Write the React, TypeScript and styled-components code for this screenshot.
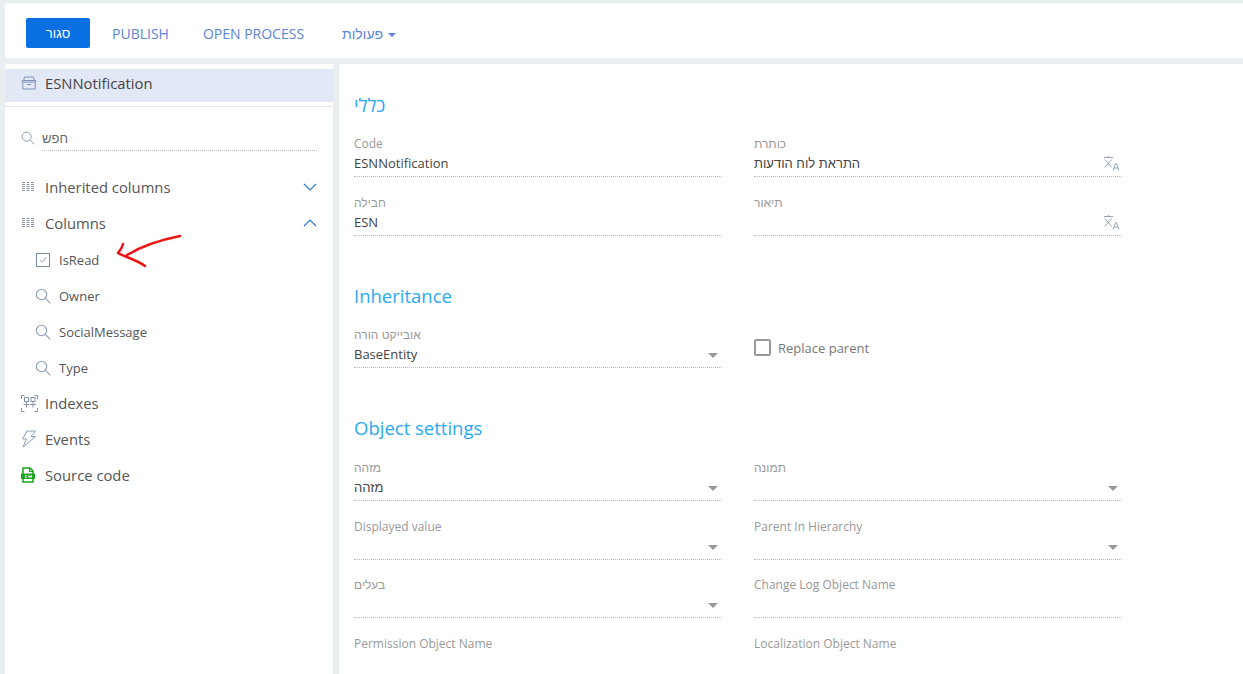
import React from "react";
import styled, { createGlobalStyle } from "styled-components";

const Global = createGlobalStyle`
  html, body { margin: 0; padding: 0; height: 100%; overflow: hidden; background: #e9eef0; }
  body { font-family: "Open Sans", "Noto Sans", "Liberation Sans", sans-serif; }
  #root { height: 674px; }
`;

const Page = styled.div`
  height: 674px;
  display: flex;
  flex-direction: column;
  padding: 3px 0 0 5px;
  box-sizing: border-box;
  overflow: hidden;
`;
const He = styled.span`
  font-family: "Liberation Sans", "Noto Sans", sans-serif;
`;
const Toolbar = styled.header`
  height: 55px;
  flex: none;
  background: #fff;
  border-radius: 3px 0 0 3px;
  display: flex;
  align-items: center;
  padding: 5px 0 0 21px;
  box-sizing: border-box;
`;
const PrimaryButton = styled.button`
  width: 64px;
  height: 30px;
  border: 0;
  border-radius: 2px;
  background: #0a6fe3;
  color: #fff;
  font: 400 13px "Liberation Sans", "Noto Sans", sans-serif;
  padding: 0;
  margin-right: 22px;
`;
const LinkButton = styled.span<{ $gap: number }>`
  font-size: 14px;
  color: #5c84d8;
  margin-right: ${(p) => p.$gap}px;
`;
const Caret = styled.i`
  display: inline-block;
  width: 0;
  height: 0;
  border: 4px solid transparent;
  border-top: 4px solid #5c84d8;
  border-bottom: 0;
  margin-left: 5px;
  vertical-align: 2px;
`;
const Body = styled.div`
  flex: 1;
  min-height: 0;
  display: flex;
  gap: 6px;
  margin-top: 6px;
`;
const Sidebar = styled.aside`
  width: 328px;
  flex: none;
  background: #fff;
  padding-top: 5px;
  box-sizing: border-box;
`;
const RootRow = styled.div`
  height: 33px;
  background: #e2e8f6;
  display: flex;
  align-items: center;
  padding: 0 0 5px 16px;
  box-sizing: border-box;
  font-size: 14.8px;
  color: #444;
  gap: 8px;
`;
const Divider = styled.div`
  height: 1px;
  background: #e6e3e8;
  margin-top: 4px;
`;
const Search = styled.div`
  display: flex;
  align-items: center;
  height: 24px;
  margin: 19px 16px 0 16px;
  gap: 7px;
`;
const SearchInput = styled.div`
  flex: 1;
  height: 25px;
  line-height: 25px;
  font-size: 13px;
  color: #666;
  border-bottom: 1px dotted #bbb;
  box-sizing: border-box;
`;
const Tree = styled.div`
  margin-top: 19px;
`;
const TreeRow = styled.div`
  height: 36px;
  display: flex;
  align-items: center;
  padding: 0 16px;
  font-size: 14.8px;
  color: #555;
`;
const ChildRow = styled.div`
  height: 36px;
  display: flex;
  align-items: center;
  padding: 2px 0 0 26px;
  box-sizing: border-box;
  font-size: 13px;
  color: #555;
`;
const IconSlot = styled.span`
  width: 24px;
  height: 18px;
  flex: none;
  display: flex;
  align-items: center;
`;
const ChildIconSlot = styled.span`
  width: 24px;
  height: 18px;
  flex: none;
  display: flex;
  align-items: center;
  justify-content: center;
  margin-right: 4px;
`;
const Label = styled.span`
  flex: 1;
`;
const Main = styled.main`
  flex: 1;
  background: #fff;
  border-radius: 3px 0 0 0;
  padding: 28px 0 0 15px;
  overflow: hidden;
`;
const SectionTitle = styled.h2<{ $top: number; $bottom: number }>`
  margin: ${(p) => p.$top}px 0 ${(p) => p.$bottom}px;
  font-size: 18.5px;
  font-weight: 400;
  line-height: 26px;
  color: #2aa9f2;
`;
const Grid = styled.div<{ $row?: number }>`
  display: grid;
  grid-template-columns: 368px 368px;
  column-gap: 32px;
  grid-auto-rows: ${(p) => p.$row ?? 59}px;
`;
const Field = styled.div`
  min-width: 0;
`;
const FieldLabel = styled.div`
  font-size: 12px;
  line-height: 16px;
  color: #999;
`;
const FieldValue = styled.div`
  height: 25px;
  padding: 2px 2px 4px 0;
  font-size: 13px;
  line-height: 18px;
  color: #444;
  border-bottom: 1px dotted #bbb;
  box-sizing: border-box;
  display: flex;
  align-items: center;
  justify-content: space-between;
`;
const SelectCaret = styled.i`
  width: 0;
  height: 0;
  border: 5px solid transparent;
  border-top: 5px solid #999;
  border-bottom: 0;
  margin: 3px 2px 0 0;
`;
const CheckField = styled.div`
  display: flex;
  align-items: center;
  gap: 7px;
  height: 59px;
  padding-bottom: 18px;
  box-sizing: border-box;
  font-size: 13px;
  color: #777;
`;
const CheckBox = styled.span`
  width: 13px;
  height: 13px;
  border: 2px solid #999;
  border-radius: 2px;
`;
const Arrow = styled.svg`
  position: absolute;
  left: 115px;
  top: 232px;
  pointer-events: none;
`;

const C = "#8c9cb8";
const Archive = () => (
  <svg width="16" height="14" viewBox="0 0 16 14" fill="none" stroke="#7f93b8">
    <path d="M2.5 5L3.5 1h9l1 4" />
    <rect x=".8" y="4.5" width="14.4" height="1.6" rx=".8" />
    <path d="M1.8 6v7h12.4V6M6 8.5h4" />
  </svg>
);
const Lines = () => (
  <svg width="14" height="12" viewBox="0 0 14 12" stroke="#8a94a4" strokeWidth="1">
    <path d="M1 1.5h3M1 3.5h3M1 5.5h3M1 7.5h3M1 9.5h3M5.5 1.5h3M5.5 3.5h3M5.5 5.5h3M5.5 7.5h3M5.5 9.5h3M10 1.5h3M10 3.5h3M10 5.5h3M10 7.5h3M10 9.5h3" />
  </svg>
);
const Chevron = ({ up }: { up?: boolean }) => (
  <svg width="14" height="8" viewBox="0 0 14 8" fill="none" stroke="#2b79d4" strokeWidth="1.2">
    <path d={up ? "M1 7l6-6 6 6" : "M1 1l6 6 6-6"} />
  </svg>
);
const Magnifier = ({ size = 16 }: { size?: number }) => (
  <svg width={size} height={size} viewBox="0 0 16 16" fill="none" stroke={C} strokeWidth="1.1">
    <circle cx="6.5" cy="6.5" r="5.2" />
    <path d="M10.3 10.3l5 5" />
  </svg>
);
const CheckIcon = () => (
  <svg width="14" height="14" viewBox="0 0 14 14" fill="none">
    <rect x=".5" y=".5" width="13" height="13" stroke="#7d8ca6" />
    <path d="M4 7l2.2 2.4L10.2 4" stroke="#9aa7bc" />
  </svg>
);
const IndexIcon = () => (
  <svg width="17" height="17" viewBox="0 0 17 17" fill="none" stroke="#8593ab">
    <path d="M.5 4V.5h3M13.5.5h3V4M.5 13v3.5h3M13.5 16.5h3V13" />
    <rect x="3.5" y="2.5" width="4" height="4" />
    <rect x="10" y="2.5" width="4" height="4" />
    <path d="M5.5 6.5v6M12 6.5v6M2.5 9.5h6M9 9.5h6" />
  </svg>
);
const Bolt = () => (
  <svg width="16" height="18" viewBox="0 0 16 18" fill="none" stroke="#8c9cb8">
    <path d="M6 1h8.5L10 6.5h4.5L2 17l3.5-8H1.5z" />
  </svg>
);
const SourceIcon = () => (
  <svg width="14" height="16" viewBox="0 0 14 16">
    <path d="M2 1h7l3 3v11H2z" fill="#fff" stroke="#1aa51e" strokeWidth="1.5" />
    <path d="M8.5 1v3.5H12" fill="none" stroke="#1aa51e" strokeWidth="1.2" />
    <rect x="0" y="6.5" width="14" height="5.5" fill="#1aa51e" />
    <path d="M4 8h2v.8H4.8v1.4H6v.8H4zM7.5 8h1v3h-1zM9.5 8h1v3h-1zM7 9h4v.9H7z" fill="#e6f6e6" />
  </svg>
);
const Translate = () => (
  <svg width="16" height="15" viewBox="0 0 16 15" fill="none" stroke="#98a3ba">
    <path d="M0 1.5h9M4.5 0v1.5M.8 3.5l7 8M7.8 3.5l-7 8" />
    <path d="M9 14.5l2.6-7h.8l2.6 7M10 12h4" />
  </svg>
);

type F = { label: React.ReactNode; value?: React.ReactNode; kind?: "text" | "translate" | "select"; plain?: boolean };

const FormField = ({ label, value, kind = "text", plain }: F) => (
  <Field>
    <FieldLabel>{label}</FieldLabel>
    {plain ? null : (
      <FieldValue>
        <span>{value}</span>
        {kind === "translate" && <Translate />}
        {kind === "select" && <SelectCaret />}
      </FieldValue>
    )}
  </Field>
);

export default function App() {
  return (
    <Page>
      <Global />
      <Toolbar>
        <PrimaryButton>סגור</PrimaryButton>
        <LinkButton $gap={34}>PUBLISH</LinkButton>
        <LinkButton $gap={38}>OPEN PROCESS</LinkButton>
        <LinkButton $gap={0}>
          <He>פעולות</He>
          <Caret />
        </LinkButton>
      </Toolbar>
      <Body>
        <Sidebar>
          <RootRow>
            <Archive />
            ESNNotification
          </RootRow>
          <Divider />
          <Search>
            <Magnifier size={14} />
            <SearchInput><He>חפש</He></SearchInput>
          </Search>
          <Tree>
            <TreeRow>
              <IconSlot><Lines /></IconSlot>
              <Label>Inherited columns</Label>
              <Chevron />
            </TreeRow>
            <TreeRow>
              <IconSlot><Lines /></IconSlot>
              <Label>Columns</Label>
              <Chevron up />
            </TreeRow>
            <ChildRow>
              <ChildIconSlot><CheckIcon /></ChildIconSlot>
              IsRead
            </ChildRow>
            <ChildRow>
              <ChildIconSlot><Magnifier /></ChildIconSlot>
              Owner
            </ChildRow>
            <ChildRow>
              <ChildIconSlot><Magnifier /></ChildIconSlot>
              SocialMessage
            </ChildRow>
            <ChildRow>
              <ChildIconSlot><Magnifier /></ChildIconSlot>
              Type
            </ChildRow>
            <TreeRow>
              <IconSlot><IndexIcon /></IconSlot>
              <Label>Indexes</Label>
            </TreeRow>
            <TreeRow>
              <IconSlot><Bolt /></IconSlot>
              <Label>Events</Label>
            </TreeRow>
            <TreeRow>
              <IconSlot><SourceIcon /></IconSlot>
              <Label>Source code</Label>
            </TreeRow>
          </Tree>
        </Sidebar>
        <Main>
          <SectionTitle $top={0} $bottom={18}>כללי</SectionTitle>
          <Grid>
            <FormField label="Code" value="ESNNotification" />
            <FormField label={<He>כותרת</He>} value={<He>התראת לוח הודעות</He>} kind="translate" />
            <FormField label={<He>חבילה</He>} value="ESN" />
            <FormField label={<He>תיאור</He>} kind="translate" />
          </Grid>
          <SectionTitle $top={29} $bottom={18}>Inheritance</SectionTitle>
          <Grid>
            <FormField label={<He>אובייקט הורה</He>} value="BaseEntity" kind="select" />
            <CheckField>
              <CheckBox />
              Replace parent
            </CheckField>
          </Grid>
          <SectionTitle $top={29} $bottom={19}>Object settings</SectionTitle>
          <Grid $row={58.6}>
            <FormField label={<He>מזהה</He>} value={<He>מזהה</He>} kind="select" />
            <FormField label={<He>תמונה</He>} kind="select" />
            <FormField label="Displayed value" kind="select" />
            <FormField label="Parent In Hierarchy" kind="select" />
            <FormField label={<He>בעלים</He>} kind="select" />
            <FormField label="Change Log Object Name" />
            <FormField label="Permission Object Name" plain />
            <FormField label="Localization Object Name" plain />
          </Grid>
        </Main>
      </Body>
      <Arrow width="70" height="40" viewBox="0 0 70 40" fill="none" stroke="#f01414" strokeWidth="2.5" strokeLinecap="round" strokeLinejoin="round">
        <path d="M65 4C50 7 30 12 12 23" />
        <path d="M8 12C7 16 5 19 3 21C10 25 22 28 30 34" />
      </Arrow>
    </Page>
  );
}
